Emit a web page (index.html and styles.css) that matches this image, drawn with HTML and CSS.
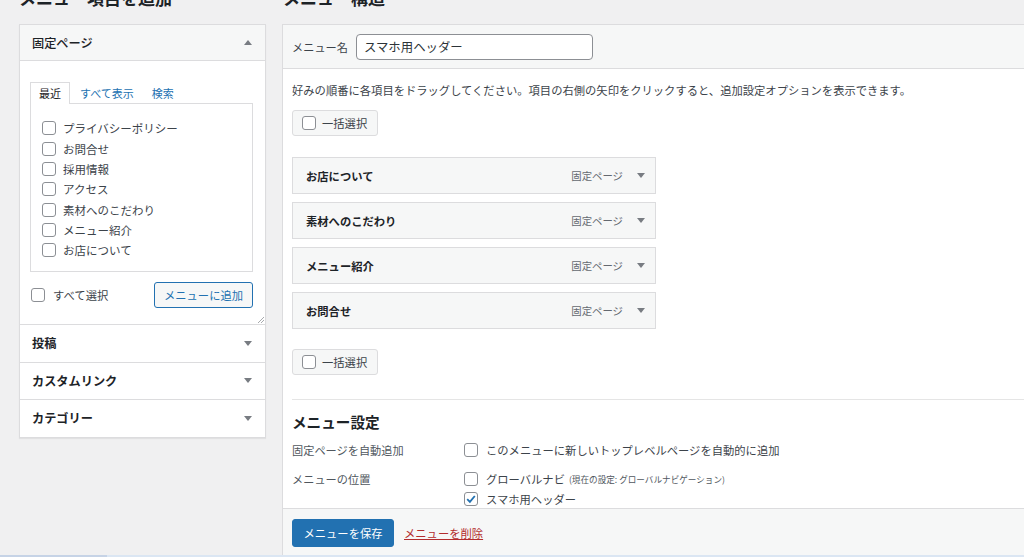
FILE: index.html
```html
<!DOCTYPE html>
<html lang="ja">
<head>
<meta charset="utf-8">
<title>メニュー</title>
<link rel="stylesheet" href="styles.css">
</head>
<body>
<div class="page">
  <div class="col-left">
    <h2 class="col-title">メニュー項目を追加</h2>
    <div class="accordion">
      <div class="acc-section open">
        <div class="acc-head">
          <span class="acc-title light">固定ページ</span>
          <svg class="arrow" width="8" height="5" viewBox="0 0 8 5"><polygon points="0,5 8,5 4,0" fill="#787c82"/></svg>
        </div>
        <div class="acc-body">
          <ul class="tabs">
            <li class="tab active">最近</li>
            <li class="tab link">すべて表示</li>
            <li class="tab link">検索</li>
          </ul>
          <div class="listbox">
            <label class="item"><span class="cb"></span>プライバシーポリシー</label>
            <label class="item"><span class="cb"></span>お問合せ</label>
            <label class="item"><span class="cb"></span>採用情報</label>
            <label class="item"><span class="cb"></span>アクセス</label>
            <label class="item"><span class="cb"></span>素材へのこだわり</label>
            <label class="item"><span class="cb"></span>メニュー紹介</label>
            <label class="item"><span class="cb"></span>お店について</label>
          </div>
          <div class="add-row">
            <label class="item select-all"><span class="cb"></span>すべて選択</label>
            <button class="btn-secondary">メニューに追加</button>
          </div>
          <svg class="resize" width="7" height="7" viewBox="0 0 7 7"><path d="M1 7 L7 1 M4 7 L7 4" stroke="#a7aaad" stroke-width="1"/></svg>
        </div>
      </div>
      <div class="acc-section">
        <div class="acc-head">
          <span class="acc-title">投稿</span>
          <svg class="arrow" width="8" height="5" viewBox="0 0 8 5"><polygon points="0,0 8,0 4,5" fill="#787c82"/></svg>
        </div>
      </div>
      <div class="acc-section">
        <div class="acc-head">
          <span class="acc-title">カスタムリンク</span>
          <svg class="arrow" width="8" height="5" viewBox="0 0 8 5"><polygon points="0,0 8,0 4,5" fill="#787c82"/></svg>
        </div>
      </div>
      <div class="acc-section">
        <div class="acc-head">
          <span class="acc-title">カテゴリー</span>
          <svg class="arrow" width="8" height="5" viewBox="0 0 8 5"><polygon points="0,0 8,0 4,5" fill="#787c82"/></svg>
        </div>
      </div>
    </div>
  </div>

  <div class="col-right">
    <h2 class="col-title">メニュー構造</h2>
    <div class="menu-panel">
      <div class="menu-head">
        <label class="name-label">メニュー名</label>
        <input class="name-input" type="text" value="スマホ用ヘッダー">
      </div>
      <div class="menu-body">
        <p class="hint">好みの順番に各項目をドラッグしてください。項目の右側の矢印をクリックすると、追加設定オプションを表示できます。</p>
        <div class="bulk"><span class="cb"></span>一括選択</div>
        <ul class="items">
          <li class="menu-item"><span class="mi-title">お店について</span><span class="mi-type">固定ページ</span><svg class="mi-arrow" width="8" height="5" viewBox="0 0 8 5"><polygon points="0,0 8,0 4,5" fill="#787c82"/></svg></li>
          <li class="menu-item"><span class="mi-title">素材へのこだわり</span><span class="mi-type">固定ページ</span><svg class="mi-arrow" width="8" height="5" viewBox="0 0 8 5"><polygon points="0,0 8,0 4,5" fill="#787c82"/></svg></li>
          <li class="menu-item"><span class="mi-title">メニュー紹介</span><span class="mi-type">固定ページ</span><svg class="mi-arrow" width="8" height="5" viewBox="0 0 8 5"><polygon points="0,0 8,0 4,5" fill="#787c82"/></svg></li>
          <li class="menu-item"><span class="mi-title">お問合せ</span><span class="mi-type">固定ページ</span><svg class="mi-arrow" width="8" height="5" viewBox="0 0 8 5"><polygon points="0,0 8,0 4,5" fill="#787c82"/></svg></li>
        </ul>
        <div class="bulk bulk-bottom"><span class="cb"></span>一括選択</div>
        <div class="settings">
          <h3 class="settings-title">メニュー設定</h3>
          <div class="set-row">
            <div class="set-label">固定ページを自動追加</div>
            <div class="set-opts">
              <label class="opt"><span class="cb"></span>このメニューに新しいトップレベルページを自動的に追加</label>
            </div>
          </div>
          <div class="set-row">
            <div class="set-label">メニューの位置</div>
            <div class="set-opts">
              <label class="opt"><span class="cb"></span>グローバルナビ <small class="note">(現在の設定: グローバルナビゲーション)</small></label>
              <label class="opt"><span class="cb checked"><svg width="12" height="12" viewBox="0 0 12 12"><path d="M2.2 6.2 L4.9 8.9 L9.8 3" fill="none" stroke="#2271b1" stroke-width="1.8"/></svg></span>スマホ用ヘッダー</label>
            </div>
          </div>
        </div>
      </div>
      <div class="menu-foot">
        <button class="btn-primary">メニューを保存</button>
        <a class="delete-link" href="#">メニューを削除</a>
      </div>
    </div>
  </div>
</div>
<div class="bottom-line"></div>
</body>
</html>
```

FILE: styles.css
```css
* { box-sizing: border-box; }

html, body {
  margin: 0;
  padding: 0;
  height: 100%;
  overflow: hidden;
}

body {
  background: #f0f0f1;
  font-family: "Noto Sans CJK JP", "Noto Sans", sans-serif;
  color: #3c434a;
  font-size: 11.3px;
}

.page {
  display: flex;
  gap: 16px;
  padding-left: 19px;
  height: 100%;
}

.col-left {
  flex: 0 0 247px;
  display: flex;
  flex-direction: column;
}

.col-right {
  flex: 0 0 800px;
  display: flex;
  flex-direction: column;
}

.col-title {
  margin: -12px 0 16px;
  height: 20px;
  line-height: 20px;
  font-size: 17px;
  font-weight: 700;
  color: #1d2327;
}

.col-right .col-title { padding-left: 1px; }

/* ---------- accordion ---------- */
.accordion {
  background: #fff;
  border: 1px solid #dcdcde;
  box-shadow: 0 1px 1px rgba(0, 0, 0, 0.06);
}

.acc-section + .acc-section { border-top: 1px solid #dcdcde; }

.acc-head {
  height: 36.6px;
  display: flex;
  align-items: center;
  justify-content: space-between;
  padding: 0 13px 0 12px;
  background: #fff;
}

.open .acc-head {
  height: 36px;
  background: #f6f7f7;
  border-bottom: 1px solid #dcdcde;
}

.acc-title {
  font-size: 12.2px;
  font-weight: 700;
  color: #1d2327;
}

.acc-title.light { font-weight: 500; }

.acc-body {
  position: relative;
  padding: 21px 12px 16px 10px;
}

.tabs {
  list-style: none;
  margin: 0;
  padding: 0;
  display: flex;
  align-items: flex-end;
  position: relative;
  z-index: 1;
}

.tab {
  height: 22px;
  line-height: 22px;
  font-size: 11px;
  margin-bottom: -1px;
}

.tab.active {
  padding: 0 8px;
  border: 1px solid #dcdcde;
  border-bottom: none;
  background: #fff;
  color: #1d2327;
  line-height: 21px;
}

.tab.link {
  color: #2271b1;
  padding: 0 8px 0 10px;
}

.listbox {
  height: 169px;
  border: 1px solid #dcdcde;
  padding: 14px 0 0 11px;
}

.item {
  display: flex;
  align-items: center;
  height: 20.35px;
  font-size: 11.5px;
  color: #3c434a;
}

.cb {
  display: inline-flex;
  align-items: center;
  justify-content: center;
  width: 14px;
  height: 14px;
  border: 1px solid #8c8f94;
  border-radius: 3px;
  background: #fff;
  margin-right: 7px;
  flex: 0 0 auto;
}

.add-row {
  margin-top: 10px;
  display: flex;
  align-items: center;
  justify-content: space-between;
}

.select-all { margin-left: 1px; font-size: 11.3px; }
.select-all .cb { margin-right: 8px; }

.btn-secondary {
  height: 26px;
  width: 99px;
  border: 1px solid #2271b1;
  border-radius: 3px;
  background: #f6f7f7;
  color: #2271b1;
  font-family: inherit;
  font-size: 11.3px;
  padding: 0;
}

.resize {
  position: absolute;
  right: 1px;
  bottom: 1px;
}

/* ---------- menu panel ---------- */
.menu-panel {
  flex: 1;
  display: flex;
  flex-direction: column;
  border: 1px solid #dcdcde;
  border-right: none;
  border-bottom: none;
  background: #fff;
}

.menu-head {
  height: 44px;
  display: flex;
  align-items: center;
  padding-left: 9px;
  background: #f6f7f7;
  border-bottom: 1px solid #dcdcde;
}

.name-label {
  font-size: 11.2px;
  color: #3c434a;
  margin-right: 8px;
}

.name-input {
  width: 237px;
  height: 26px;
  border: 1px solid #8c8f94;
  border-radius: 4px;
  padding: 0 7px;
  font-family: inherit;
  font-size: 12.4px;
  color: #2c3338;
  background: #fff;
}

.menu-body {
  padding: 13px 0 0 9px;
}

.hint {
  margin: 0;
  line-height: 16px;
  font-size: 11.3px;
  color: #3c434a;
}

.bulk {
  margin-top: 12px;
  width: 86px;
  height: 26px;
  display: flex;
  align-items: center;
  padding-left: 9px;
  background: #f6f7f7;
  border: 1px solid #dcdcde;
  border-radius: 3px;
  font-size: 11.3px;
  color: #3c434a;
}

.bulk .cb { margin-right: 6px; }

.items {
  list-style: none;
  margin: 21px 0 0;
  padding: 0;
  display: flex;
  flex-direction: column;
  gap: 8px;
}

.menu-item {
  width: 364px;
  height: 37px;
  display: flex;
  align-items: center;
  padding: 0 10px 0 13px;
  background: #f6f7f7;
  border: 1px solid #dcdcde;
}

.mi-title {
  flex: 1;
  font-weight: 700;
  font-size: 11.3px;
  color: #1d2327;
}

.mi-type {
  font-size: 10.4px;
  color: #646970;
  margin-right: 14px;
}

.bulk-bottom { margin-top: 20px; }

.settings {
  margin-top: 24px;
  margin-bottom: -2px;
  border-top: 1px solid #e5e5e5;
  padding-top: 12px;
}

.settings-title {
  margin: 0;
  height: 20px;
  line-height: 20px;
  font-size: 14.6px;
  font-weight: 700;
  color: #1d2327;
}

.set-row {
  display: flex;
  margin-top: 8px;
}

.set-label {
  flex: 0 0 172px;
  line-height: 20px;
  font-size: 11.2px;
  color: #50575e;
}

.set-opts {
  display: flex;
  flex-direction: column;
}

.opt {
  display: flex;
  align-items: center;
  height: 20.5px;
  font-size: 11.3px;
  color: #3c434a;
}

.opt .cb { margin-right: 8px; }

.note {
  font-size: 8.6px;
  color: #50575e;
  margin-left: 4px;
}

.menu-foot {
  flex: 1;
  position: relative;
  background: #f6f7f7;
  border-top: 1px solid #dcdcde;
  padding: 10px 9px;
  display: flex;
  align-items: flex-start;
  gap: 10px;
}

.btn-primary {
  width: 102px;
  height: 28px;
  border: 1px solid #2271b1;
  border-radius: 3px;
  background: #2271b1;
  color: #fff;
  font-family: inherit;
  font-size: 11.3px;
  padding: 0;
}

.delete-link {
  line-height: 28px;
  font-size: 11.3px;
  color: #b32d2e;
  text-decoration: underline;
}

.bottom-line {
  position: fixed;
  left: 0;
  right: 0;
  bottom: 0;
  height: 2px;
  background: linear-gradient(to right, #c6d3e6 0, #c6d3e6 107px, #dbe6f3 107px);
}
```
